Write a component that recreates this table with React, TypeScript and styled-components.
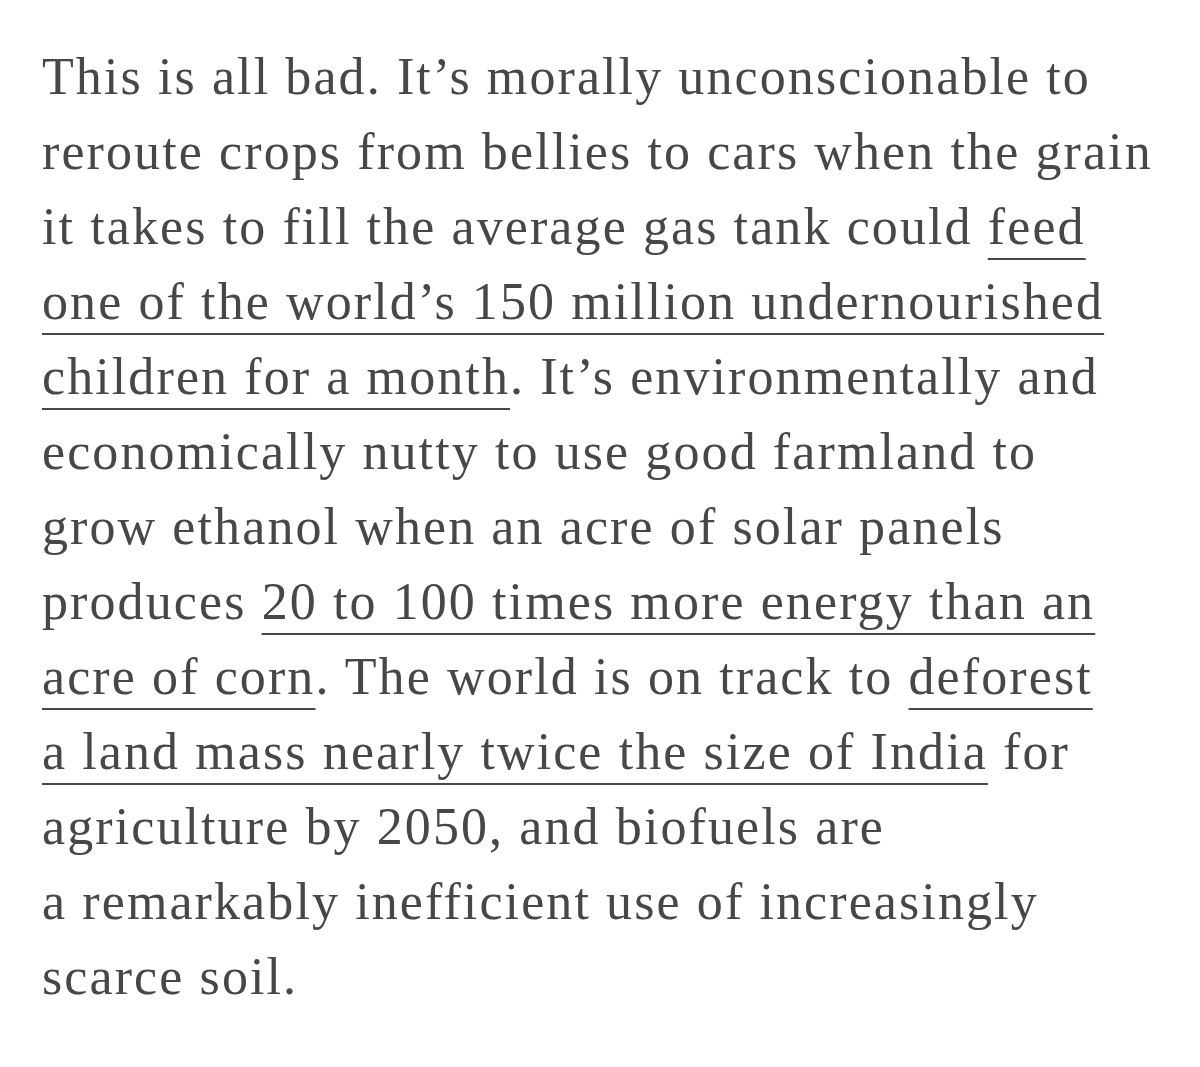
import styled, { createGlobalStyle } from "styled-components";

const Global = createGlobalStyle`
  html, body {
    margin: 0;
    padding: 0;
    background: #fff;
  }
`;

export default function App() {
  return (
    <Page>
      <Global />
      <Paragraph>
        This is all bad. It’s morally unconscionable to
        <br />
        reroute crops from bellies to cars when the grain
        <br />
        it takes to fill the average gas tank could{" "}
        <Link href="#">
          feed
          <br />
          one of the world’s 150 million undernourished
          <br />
          children for a month
        </Link>
        . It’s environmentally and
        <br />
        economically nutty to use good farmland to
        <br />
        grow ethanol when an acre of solar panels
        <br />
        produces{" "}
        <Link href="#">
          20 to 100 times more energy than an
          <br />
          acre of corn
        </Link>
        . The world is on track to{" "}
        <Link href="#">
          deforest
          <br />a land mass nearly twice the size of India
        </Link>{" "}
        for
        <br />
        agriculture by 2050, and biofuels are
        <br />
        a remarkably inefficient use of increasingly
        <br />
        scarce soil.
      </Paragraph>
    </Page>
  );
}

const Page = styled.div`
  width: 1200px;
  min-height: 1067px;
  background: #fff;
  padding: 39px 0 0 42px;
  box-sizing: border-box;
`;

const Paragraph = styled.p`
  margin: 0;
  font-family: "Liberation Serif", "Times New Roman", serif;
  font-size: 52px;
  line-height: 75px;
  letter-spacing: 2.1px;
  color: #474747;
  white-space: nowrap;
`;

const Link = styled.a`
  color: inherit;
  text-decoration: underline;
  text-decoration-thickness: 2px;
  text-underline-offset: 14px;
  text-decoration-color: #474747;
`;
